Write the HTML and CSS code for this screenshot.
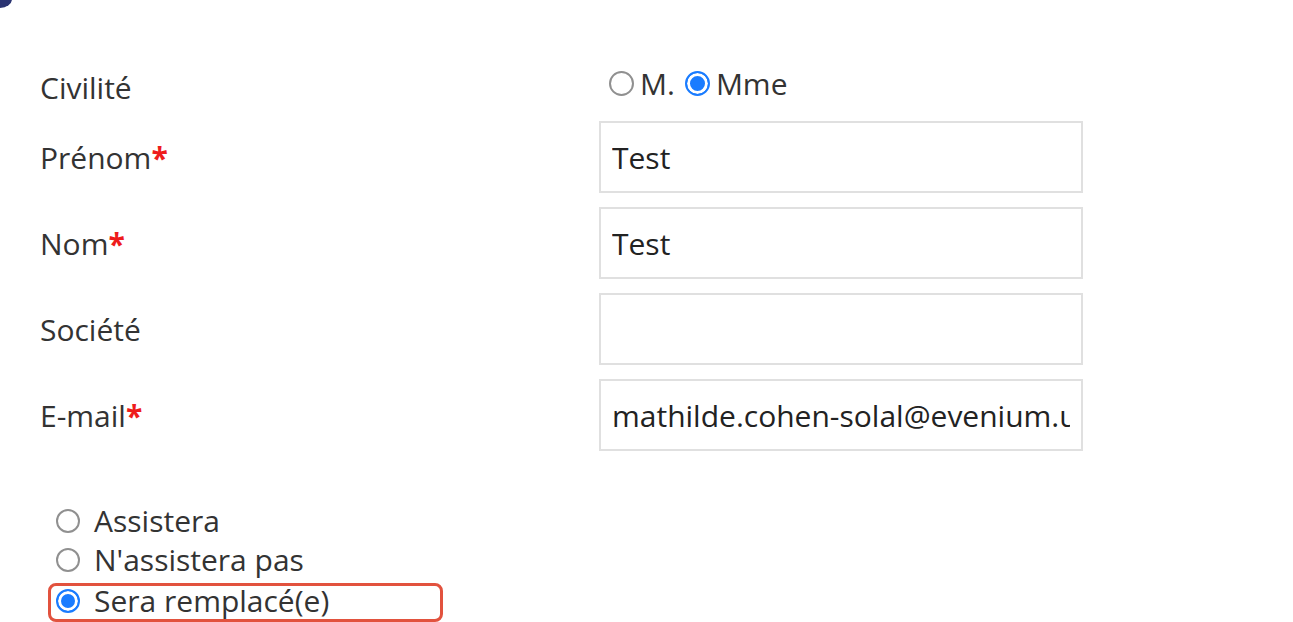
FILE: index.html
```html
<!DOCTYPE html>
<html lang="fr">
<head>
<meta charset="utf-8">
<title>Inscription</title>
<link rel="stylesheet" href="styles.css">
</head>
<body>
<div class="corner"></div>
<form class="form">
  <div class="row row-civ">
    <span class="label">Civilité</span>
    <div class="civ-options">
      <label class="civ-opt"><input type="radio" name="civ" class="radio">M.</label>
      <label class="civ-opt"><input type="radio" name="civ" class="radio" checked>Mme</label>
    </div>
  </div>
  <div class="row">
    <label class="label" for="prenom">Prénom<span class="req">*</span></label>
    <input id="prenom" class="field" type="text" value="Test">
  </div>
  <div class="row">
    <label class="label" for="nom">Nom<span class="req">*</span></label>
    <input id="nom" class="field" type="text" value="Test">
  </div>
  <div class="row">
    <label class="label" for="societe">Société</label>
    <input id="societe" class="field" type="text" value="">
  </div>
  <div class="row">
    <label class="label" for="email">E-mail<span class="req">*</span></label>
    <input id="email" class="field" type="text" value="mathilde.cohen-solal@evenium.u">
  </div>
  <div class="attendance">
    <label class="att-opt"><input type="radio" name="att" class="radio">Assistera</label>
    <label class="att-opt"><input type="radio" name="att" class="radio">N'assistera pas</label>
    <label class="att-opt selected"><input type="radio" name="att" class="radio" checked>Sera remplacé(e)</label>
  </div>
</form>
</body>
</html>
```
FILE: styles.css
```css
html, body {
  margin: 0;
  padding: 0;
  background: #ffffff;
}
body {
  font-family: "Open Sans", "Noto Sans", sans-serif;
  font-size: 30px;
  color: #333333;
  position: relative;
  overflow: hidden;
  height: 622px;
}
.corner {
  position: absolute;
  left: -12px;
  top: -10px;
  width: 24px;
  height: 18px;
  border-radius: 50%;
  background: #2b3472;
}
.form {
  padding: 62px 0 0 40px;
}
.row {
  display: grid;
  grid-template-columns: 559px 484px;
  align-items: center;
  height: 72px;
  margin-bottom: 14px;
}
.row-civ {
  height: 45px;
  align-items: start;
}
.row-civ .label {
  padding-top: 5px;
}
.label {
  color: #333333;
  line-height: normal;
}
.req {
  color: #ee1c1c;
  font-weight: 700;
}
.civ-options {
  display: flex;
  align-items: center;
  padding-top: 1px;
  color: #333333;
}
.civ-opt {
  display: flex;
  align-items: center;
}
.radio {
  appearance: none;
  -webkit-appearance: none;
  box-sizing: border-box;
  width: 25px;
  height: 25px;
  margin: 0 6px 0 10px;
  border: 2px solid #909090;
  border-radius: 50%;
  background: #ffffff;
  flex: none;
}
.radio:checked {
  border-color: #1a7cff;
  background: #1a7cff;
  box-shadow: inset 0 0 0 3px #ffffff;
}
.field {
  box-sizing: border-box;
  width: 484px;
  height: 72px;
  border: 2px solid #e0e0e0;
  border-radius: 0;
  padding: 0 11px;
  margin: 0;
  font-family: "Open Sans", "Noto Sans", sans-serif;
  font-size: 30px;
  color: #222222;
  background: #ffffff;
  outline: none;
}
.attendance {
  margin-top: 52px;
  margin-left: 8px;
  display: flex;
  flex-direction: column;
  align-items: flex-start;
}
.att-opt {
  box-sizing: border-box;
  display: flex;
  align-items: center;
  width: 395px;
  border: 3px solid transparent;
  border-radius: 8px;
  padding: 0 0 3px 0;
  line-height: 30px;
  margin-bottom: 0;
  color: #333333;
}
.att-opt .radio {
  width: 24px;
  height: 24px;
  margin: 0 14px 0 5px;
}
.att-opt.selected {
  border-color: #e2523e;
  margin-top: 2px;
}
```
